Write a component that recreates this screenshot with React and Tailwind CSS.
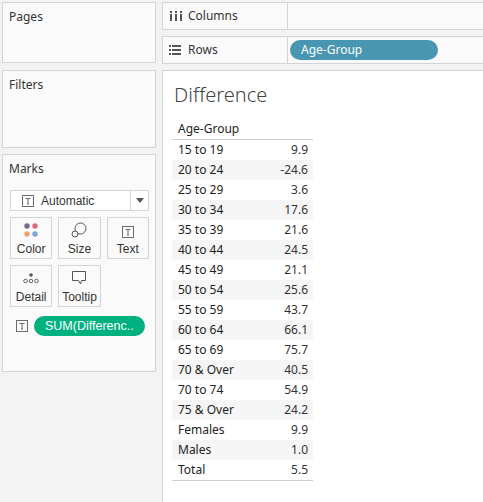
import React from "react";

const rows = [
  ["15 to 19", "9.9"],
  ["20 to 24", "-24.6"],
  ["25 to 29", "3.6"],
  ["30 to 34", "17.6"],
  ["35 to 39", "21.6"],
  ["40 to 44", "24.5"],
  ["45 to 49", "21.1"],
  ["50 to 54", "25.6"],
  ["55 to 59", "43.7"],
  ["60 to 64", "66.1"],
  ["65 to 69", "75.7"],
  ["70 & Over", "40.5"],
  ["70 to 74", "54.9"],
  ["75 & Over", "24.2"],
  ["Females", "9.9"],
  ["Males", "1.0"],
  ["Total", "5.5"],
];

const TIcon = ({ className = "" }) => (
  <svg width="12" height="12" viewBox="0 0 12 12" className={className}>
    <rect x="0.5" y="0.5" width="11" height="11" fill="none" stroke="#6b6b6b" strokeWidth="1" />
    <path d="M3.5 3.5 H8.5 M6 3.5 V9 M5 9 H7" stroke="#6b6b6b" strokeWidth="1" fill="none" />
  </svg>
);

const MarkButton = ({ icon, label }) => (
  <div className="h-[42px] border border-[#d4d4d4] bg-[#fafafa] flex flex-col items-center">
    <div className="h-[16px] mt-[4px] flex items-center justify-center">{icon}</div>
    <div className="mt-[4px] leading-[14px] text-[12px] text-[#333]" style={{ fontFamily: '"Liberation Sans", Arial, sans-serif' }}>
      {label}
    </div>
  </div>
);

export default function App() {
  return (
    <div
      className="w-[483px] h-[502px] flex bg-[#f3f3f3] overflow-hidden text-[#333]"
      style={{ fontFamily: '"Noto Sans", sans-serif' }}
    >
      {/* Left column */}
      <div className="w-[162px] shrink-0 pt-[2px] pl-[2px] flex flex-col">
        <div className="w-[154px] h-[61px] border border-[#d4d4d4] bg-[#fafafa] pt-[6px] pl-[6px]">
          <div className="text-[12px] leading-4">Pages</div>
        </div>
        <div className="w-[154px] h-[78px] border border-[#d4d4d4] bg-[#fafafa] pt-[6px] pl-[6px] mt-[7px]">
          <div className="text-[12px] leading-4">Filters</div>
        </div>
        <div className="w-[154px] h-[218px] border border-[#d4d4d4] bg-[#fafafa] pt-[6px] pl-[6px] mt-[6px]">
          <div className="text-[12px] leading-4">Marks</div>
          <div className="ml-[1px] w-[139px]">
            <div className="mt-[13px] h-[21px] border border-[#d4d4d4] bg-white flex items-center">
              <div className="flex-1 flex items-center pl-[11px] gap-[7px]">
                <TIcon />
                <span className="text-[12px] text-[#333]" style={{ fontFamily: '"Liberation Sans", Arial, sans-serif' }}>
                  Automatic
                </span>
              </div>
              <div className="w-[18px] h-full border-l border-[#d4d4d4] flex items-center justify-center">
                <svg width="8" height="5" viewBox="0 0 8 5">
                  <path d="M0 0 H8 L4 5 Z" fill="#555" />
                </svg>
              </div>
            </div>
            <div className="mt-[6px] grid grid-cols-3 gap-[6px]">
              <MarkButton
                label="Color"
                icon={
                  <svg width="14" height="14" viewBox="0 0 14 14">
                    <circle cx="3" cy="3" r="2.7" fill="#7b6895" />
                    <circle cx="11" cy="3" r="2.7" fill="#e0677a" />
                    <circle cx="3" cy="11" r="2.7" fill="#f1a271" />
                    <circle cx="11" cy="11" r="2.7" fill="#7fa6d1" />
                  </svg>
                }
              />
              <MarkButton
                label="Size"
                icon={
                  <svg width="16" height="16" viewBox="0 0 16 16">
                    <circle cx="9.5" cy="6.5" r="5.5" fill="none" stroke="#555" strokeWidth="1" />
                    <circle cx="4" cy="12" r="3" fill="#fafafa" stroke="#555" strokeWidth="1" />
                  </svg>
                }
              />
              <MarkButton label="Text" icon={<TIcon className="mt-[3px]" />} />
              <MarkButton
                label="Detail"
                icon={
                  <svg width="16" height="14" viewBox="0 0 16 14">
                    <circle cx="8" cy="4" r="1.8" fill="#555" />
                    <circle cx="2.5" cy="10" r="1.8" fill="none" stroke="#555" strokeWidth="0.9" />
                    <circle cx="8" cy="10" r="1.8" fill="none" stroke="#555" strokeWidth="0.9" />
                    <circle cx="13.5" cy="10" r="1.8" fill="none" stroke="#555" strokeWidth="0.9" />
                  </svg>
                }
              />
              <MarkButton
                label="Tooltip"
                icon={
                  <svg width="16" height="16" viewBox="0 0 16 16">
                    <path d="M1.5 1.5 H14.5 V10.5 H10.5 L9.5 14 L7.5 10.5 H1.5 Z" fill="none" stroke="#555" strokeWidth="1" strokeLinejoin="miter" />
                  </svg>
                }
              />
            </div>
            <div className="mt-[9px] flex items-center">
              <TIcon className="ml-[6px]" />
              <div
                className="ml-[6px] h-[20px] w-[111px] rounded-full bg-[#00b180] text-white text-[12.5px] flex items-center pl-[11px]"
                style={{ fontFamily: '"Liberation Sans", Arial, sans-serif' }}
              >
                SUM(Differenc..
              </div>
            </div>
          </div>
        </div>
      </div>

      {/* Right column */}
      <div className="flex-1 pt-[2px] flex flex-col">
        <div className="h-[28px] border-y border-l border-[#d4d4d4] bg-[#fafafa] flex">
          <div className="w-[125px] border-r border-[#d4d4d4] flex items-center pl-[7px]">
            <svg width="12" height="10" viewBox="0 0 12 10">
              <rect x="0" y="0" width="2" height="2" fill="#555" />
              <rect x="0" y="3" width="2" height="7" fill="#555" />
              <rect x="5" y="0" width="2" height="2" fill="#555" />
              <rect x="5" y="3" width="2" height="7" fill="#555" />
              <rect x="10" y="0" width="2" height="2" fill="#555" />
              <rect x="10" y="3" width="2" height="7" fill="#555" />
            </svg>
            <span className="ml-[6px] text-[12px]">Columns</span>
          </div>
          <div className="flex-1" />
        </div>
        <div className="mt-[6px] h-[28px] border-y border-l border-[#d4d4d4] bg-[#fafafa] flex">
          <div className="w-[125px] border-r border-[#d4d4d4] flex items-center pl-[6px]">
            <svg width="12" height="10" viewBox="0 0 12 10">
              <rect x="0" y="0" width="2" height="2" fill="#555" />
              <rect x="3" y="0" width="9" height="2" fill="#555" />
              <rect x="0" y="4" width="2" height="2" fill="#555" />
              <rect x="3" y="4" width="9" height="2" fill="#555" />
              <rect x="0" y="8" width="2" height="2" fill="#555" />
              <rect x="3" y="8" width="9" height="2" fill="#555" />
            </svg>
            <span className="ml-[7px] text-[12px]">Rows</span>
          </div>
          <div className="flex-1 flex items-center pl-[2px]">
            <div className="h-[20px] w-[148px] rounded-full bg-[#4996b2] text-white text-[12px] flex items-center pl-[11px]">
              Age-Group
            </div>
          </div>
        </div>
        <div className="mt-[6px] flex-1 bg-white border-t border-l border-[#d4d4d4] pt-[10px] pl-[9px]">
          <div className="ml-[2px] text-[20px] leading-[28px] font-light text-[#444]">Difference</div>
          <div className="mt-[10px] w-[141px]">
            <div className="h-[21px] border-b border-[#cfcfcf] pl-[6px] text-[12px] leading-[20px] text-[#222]">
              Age-Group
            </div>
            {rows.map(([label, val], i) => (
              <div
                key={label}
                className={`h-[20px] flex justify-between items-center pl-[6px] pr-[5px] text-[12px] leading-[20px] ${
                  i % 2 === 1 ? "bg-[#f5f5f5]" : "bg-white"
                }`}
              >
                <span className="text-[#222]">{label}</span>
                <span className="text-[#333]">{val}</span>
              </div>
            ))}
            <div className="border-t border-[#cfcfcf]" />
          </div>
        </div>
      </div>
    </div>
  );
}
